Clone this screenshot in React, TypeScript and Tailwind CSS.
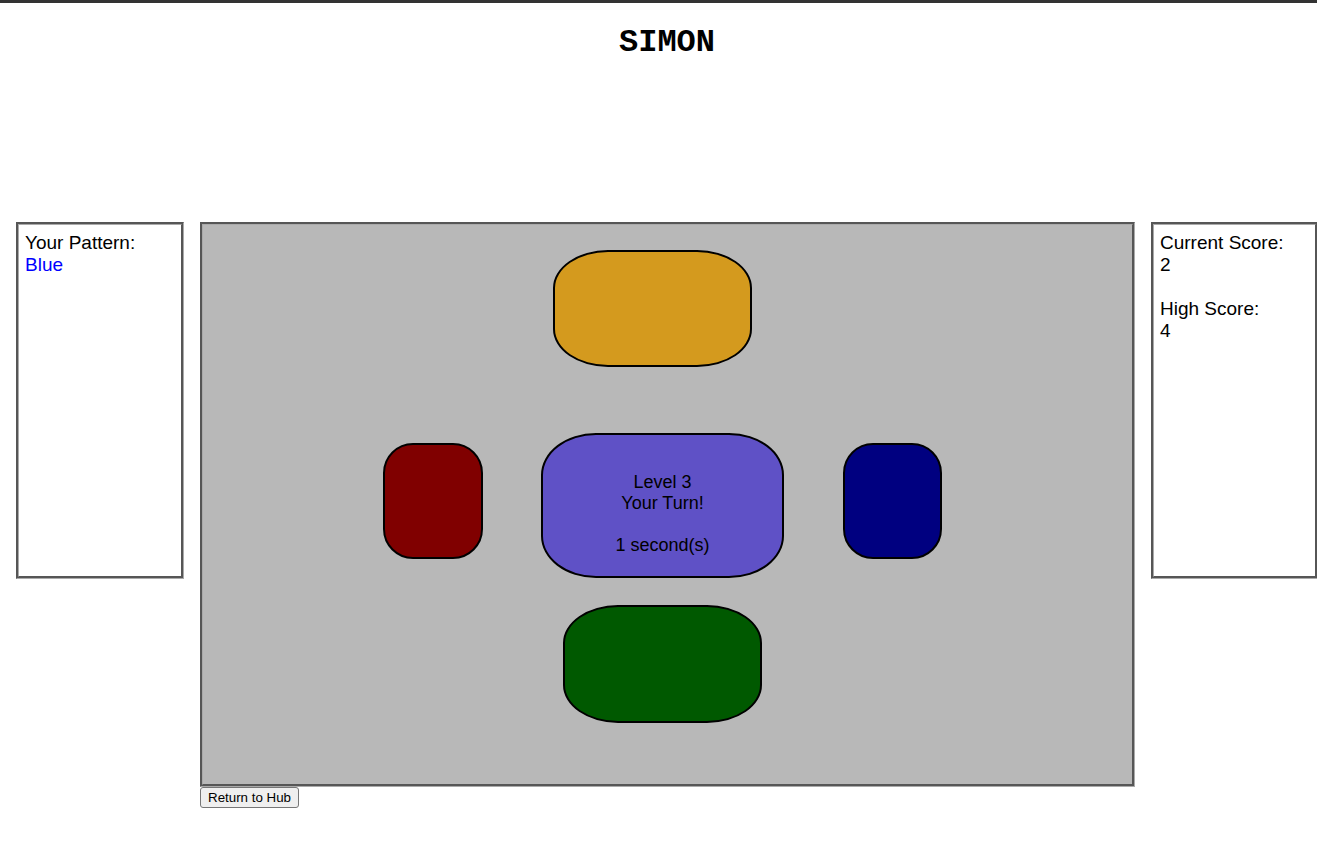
const groove = "border-[3px] border-[#aaa] [border-style:groove]!";

const Pad = ({ className }: { className: string }) => (
  <div className={`border-2 border-black ${className}`} />
);

export default function App() {
  return (
    <div className="min-h-[863px] overflow-hidden bg-white font-['Liberation_Sans',Arial,sans-serif] text-black">
      <div className="h-[3px] bg-[#333]" />
      <h1 className="pl-[17px] pt-[21px] text-center font-['Liberation_Mono','Courier_New',monospace] text-[32px] font-bold leading-[37px]">
        SIMON
      </h1>
      <div className="mt-[161px] flex items-start pl-4">
        <div
          className={`${groove} h-[357px] w-[168px] shrink-0 px-[6px] py-[7px] text-[19px] leading-[22px]`}
        >
          <div>Your Pattern:</div>
          <div className="text-[#0000ff]">Blue</div>
        </div>
        <div className="ml-[16px] flex w-[935px] shrink-0 flex-col items-start">
          <div
            className={`${groove} flex h-[565px] w-full flex-col items-center bg-[#b8b8b8]`}
          >
            <Pad className="ml-[-30px] mt-[25px] h-[117px] w-[199px] rounded-[55px/38px] bg-[#d49a1e]" />
            <div className="ml-[-10px] mt-[66px] flex items-start">
              <Pad className="mt-[10px] h-[116px] w-[100px] rounded-[30px] bg-[#800000]" />
              <div className="ml-[58px] flex h-[145px] w-[243px] flex-col items-center justify-center rounded-[55px/42px] border-2 border-black bg-[#5f51c6] pt-[17px] text-center text-[18px] leading-[21px]">
                <div>Level 3</div>
                <div>Your Turn!</div>
                <div className="h-[21px]" />
                <div>1 second(s)</div>
              </div>
              <Pad className="ml-[59px] mt-[10px] h-[116px] w-[99px] rounded-[30px] bg-[#000080]" />
            </div>
            <Pad className="ml-[-10px] mt-[27px] h-[118px] w-[199px] rounded-[55px/38px] bg-[#005900]" />
          </div>
          <button className="h-[21px] rounded-[3px] border border-[#767676] bg-[#efefef] px-[7px] text-[13.33px] leading-[17px]">
            Return to Hub
          </button>
        </div>
        <div
          className={`${groove} ml-[16px] h-[357px] w-[167px] shrink-0 px-[6px] py-[7px] text-[19px] leading-[22px]`}
        >
          <div>Current Score:</div>
          <div>2</div>
          <div className="h-[22px]" />
          <div>High Score:</div>
          <div>4</div>
        </div>
      </div>
    </div>
  );
}
